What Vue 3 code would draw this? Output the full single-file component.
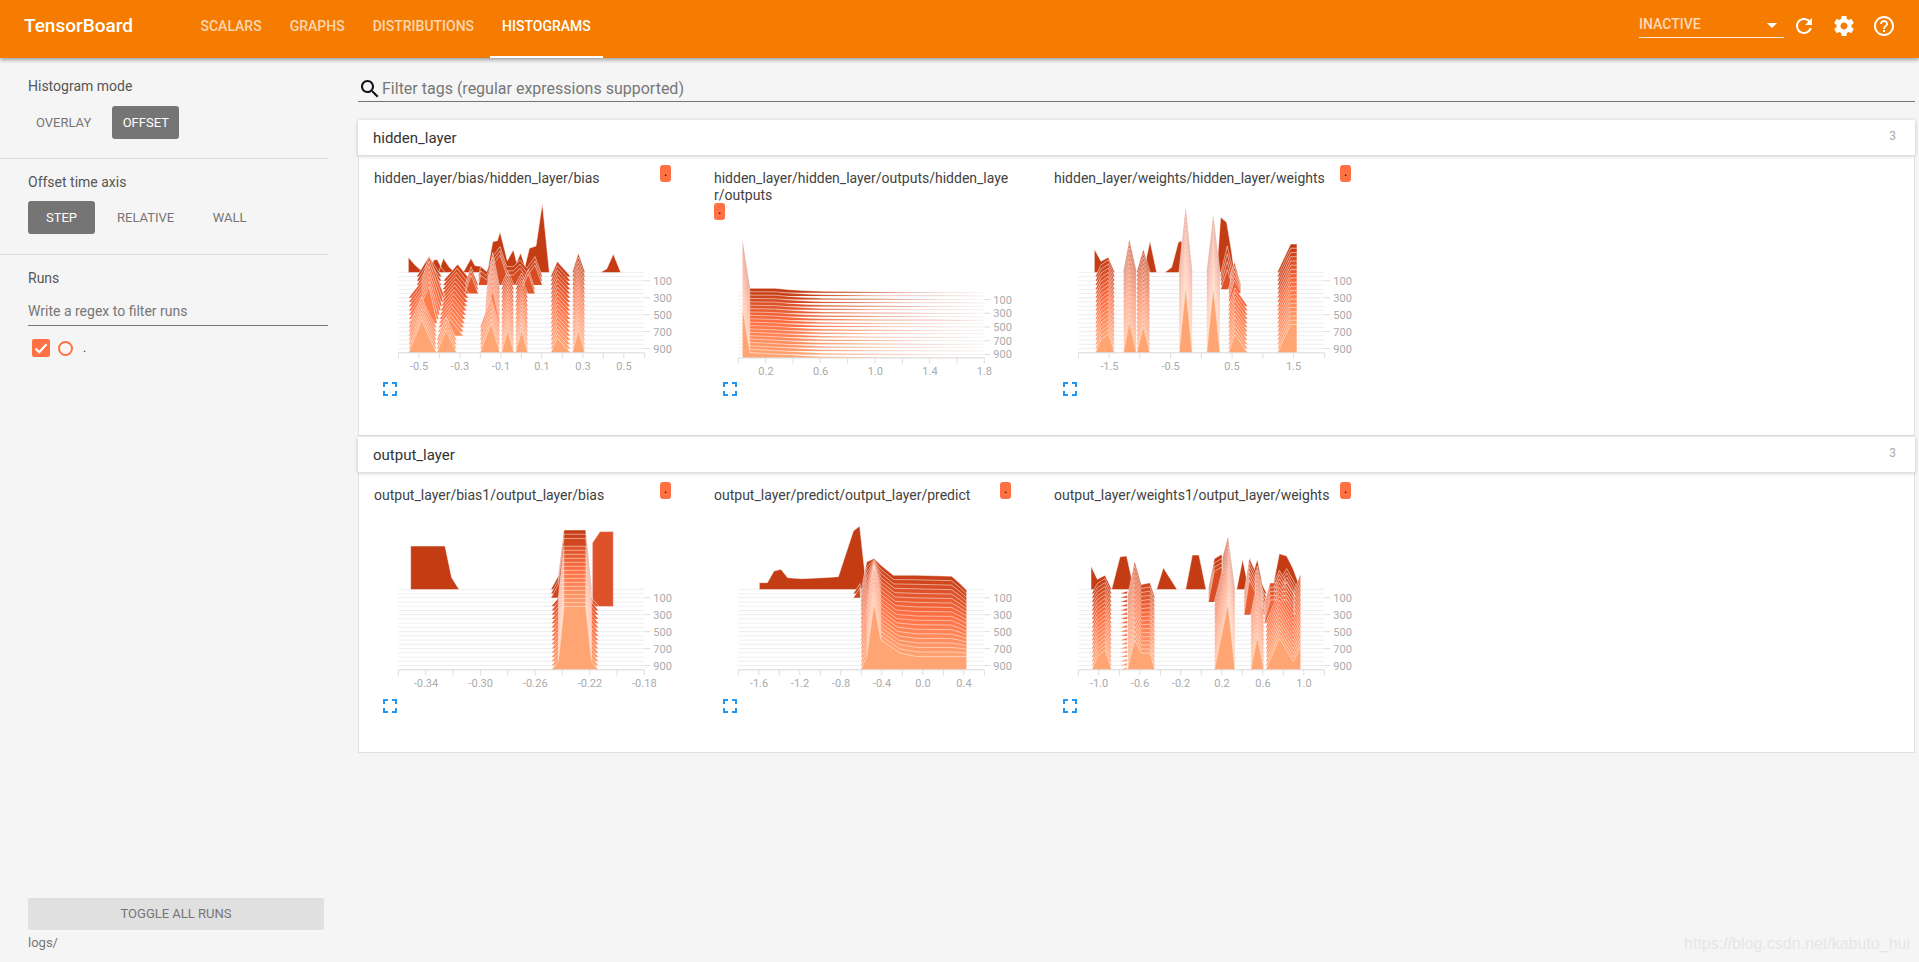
<script setup>
const tabs = ['Scalars', 'Graphs', 'Distributions', 'Histograms']

const b = (r0, r1, a, e = a) => ({ r0, r1, a, e })

const predictMid = [[482, 0], [500, 65], [522, 190], [543, 88], [590, 52], [650, 47], [755, 46], [780, 35], [800, 25], [800, 0]]

const charts1 = [
  {
    title: 'hidden_layer/bias/hidden_layer/bias', top: 78, base: 337, step: 12.7,
    ticks: 13, labels: [[177, '-0.5'], [300, '-0.3'], [423, '-0.1'], [546, '0.1'], [669, '0.3'], [792, '0.5']],
    blobs: [
      b(0, 0, [[145, 0], [145, 45], [165, 22], [190, 0]]),
      b(0, 0, [[207, 0], [222, 38], [232, 38], [245, 12], [255, 0]]),
      b(0, 0, [[236, 0], [250, 42], [268, 15], [285, 0]]),
      b(0, 0, [[310, 0], [333, 42], [345, 20], [362, 18], [382, 0], [398, 92], [412, 95], [420, 122], [442, 35], [460, 68], [470, 30], [482, 58], [495, 18], [508, 72], [528, 79], [547, 207], [568, 0]]),
      b(0, 0, [[722, 0], [740, 10], [760, 55], [782, 0]]),
      b(1, 5, [[170, 0], [207, 60], [245, 0]]),
      b(1, 3, [[355, 0], [362, 30], [380, 15], [398, 60], [420, 90], [440, 30], [460, 30], [480, 50], [500, 25], [525, 60], [547, 0]]),
      b(3, 5, [[315, 0], [333, 55], [355, 0]]),
      b(4, 5, [[480, 0], [505, 60], [525, 0]]),
      b(6, 12, [[146, 0], [185, 50], [207, 125], [255, 0]], [[146, 0], [185, 60], [207, 110], [232, 0]]),
      b(13, 19, [[146, 0], [185, 90], [207, 40], [230, 0]], [[146, 0], [185, 98], [207, 48], [230, 0]]),
      b(2, 15, [[250, 0], [293, 50], [333, 0]], [[232, 0], [270, 50], [310, 0]]),
      b(16, 19, [[230, 0], [258, 68], [290, 0]]),
      b(4, 12, [[380, 0], [398, 110], [420, 0]], [[372, 0], [398, 100], [420, 0]]),
      b(13, 19, [[360, 0], [393, 88], [420, 0]]),
      b(3, 19, [[424, 0], [443, 42], [462, 0]], [[424, 0], [443, 68], [462, 0]]),
      b(3, 19, [[466, 0], [485, 36], [504, 0]], [[466, 0], [485, 68], [504, 0]]),
      b(1, 19, [[572, 0], [592, 45], [632, 0]]),
      b(0, 19, [[637, 0], [655, 57], [675, 0]], [[637, 0], [655, 68], [675, 0]])
    ]
  },
  {
    title: 'hidden_layer/hidden_layer/outputs/hidden_layer/outputs', top: 180, base: 398, step: 10.3,
    ticks: 10, labels: [[198, '0.2'], [362, '0.6'], [526, '1.0'], [690, '1.4'], [853, '1.8']],
    blobs: [
      b(0, 19, [[127, 0], [127, 160], [150, 13], [225, 13], [270, 9], [320, 6], [370, 4], [530, 2], [700, 0.8], [850, 0]],
        [[127, 0], [127, 154], [150, 16], [220, 12], [280, 9], [330, 6], [370, 4], [530, 2], [700, 0.8], [850, 0]])
    ]
  },
  {
    title: 'hidden_layer/weights/hidden_layer/weights', top: 78, base: 337, step: 12.7,
    ticks: 9, labels: [[208, '-1.5'], [392, '-0.5'], [576, '0.5'], [761, '1.5']],
    blobs: [
      b(0, 0, [[163, 0], [163, 70], [183, 33], [205, 45], [224, 0]]),
      b(0, 0, [[310, 0], [330, 94], [350, 0]]),
      b(0, 0, [[375, 0], [395, 15], [415, 90], [425, 95], [437, 0]]),
      b(0, 0, [[530, 0], [542, 165], [560, 150], [575, 60], [583, 0]]),
      b(1, 4, [[540, 0], [562, 92], [583, 0]], [[542, 0], [562, 60], [580, 0]]),
      b(1, 19, [[166, 0], [183, 35], [205, 50], [224, 0]], [[166, 0], [183, 40], [205, 58], [224, 0]]),
      b(0, 19, [[250, 0], [268, 99], [290, 0]], [[250, 0], [268, 93], [290, 0]]),
      b(0, 19, [[290, 0], [310, 69], [330, 0]], [[290, 0], [310, 78], [330, 0]]),
      b(0, 19, [[417, 0], [437, 195], [457, 0]], [[417, 0], [437, 198], [457, 0]]),
      b(0, 19, [[500, 0], [520, 172], [540, 0]], [[500, 0], [520, 198], [540, 0]]),
      b(3, 7, [[565, 0], [583, 70], [603, 0]], [[565, 0], [583, 65], [603, 30]]),
      b(8, 19, [[565, 0], [585, 55], [623, 0]]),
      b(0, 19, [[712, 0], [752, 85], [771, 85], [771, 0]])
    ]
  }
]

const charts2 = [
  {
    title: 'output_layer/bias1/output_layer/bias', top: 99, base: 358, step: 12.7,
    ticks: 10, labels: [[198, '-0.34'], [362, '-0.30'], [526, '-0.26'], [690, '-0.22'], [853, '-0.18']],
    blobs: [
      b(0, 0, [[152, 0], [152, 130], [255, 130], [275, 35], [297, 0]]),
      b(0, 2, [[573, 0], [595, 40], [612, 178], [677, 178], [695, 0]]),
      b(4, 4, [[697, 0], [697, 190], [720, 224], [760, 224], [760, 0]]),
      b(4, 19, [[574, 0], [595, 25], [612, 180], [677, 180], [695, 25], [716, 0]], [[574, 0], [595, 25], [612, 190], [677, 190], [695, 25], [716, 0]])
    ]
  },
  {
    title: 'output_layer/predict/output_layer/predict', top: 99, base: 358, step: 12.7,
    ticks: 13, labels: [[177, '-1.6'], [300, '-1.2'], [423, '-0.8'], [546, '-0.4'], [669, '0.0'], [792, '0.4']],
    blobs: [
      b(0, 0, [[178, 0], [178, 20], [202, 20], [222, 55], [243, 60], [263, 35], [305, 32], [370, 35], [415, 38], [460, 175], [479, 190], [500, 0]]),
      b(1, 2, [[460, 0], [480, 30], [482, 0]]),
      b(1, 10, [[482, 0], [500, 95], [522, 105], [543, 85], [580, 55], [650, 55], [755, 52], [780, 30], [800, 10], [800, 0]], predictMid),
      b(11, 19, predictMid, [[482, 0], [500, 40], [522, 200], [543, 90], [600, 50], [650, 40], [755, 40], [780, 40], [800, 40], [800, 0]])
    ]
  },
  {
    title: 'output_layer/weights1/output_layer/weights', top: 99, base: 358, step: 12.7,
    ticks: 13, labels: [[177, '-1.0'], [300, '-0.6'], [423, '-0.2'], [546, '0.2'], [669, '0.6'], [792, '1.0']],
    blobs: [
      b(0, 0, [[153, 0], [153, 70], [172, 30], [195, 42], [215, 0], [240, 98], [260, 100], [282, 0]]),
      b(0, 0, [[350, 0], [370, 65], [411, 0]]),
      b(0, 0, [[437, 0], [457, 103], [477, 103], [498, 0]]),
      b(0, 0, [[590, 0], [608, 90], [620, 30], [630, 95], [640, 50], [652, 90], [670, 0]]),
      b(0, 0, [[697, 0], [718, 107], [740, 100], [760, 60], [782, 0]]),
      b(0, 3, [[505, 0], [523, 92], [545, 105], [565, 0]]),
      b(1, 6, [[612, 0], [628, 105], [650, 60], [680, 0]]),
      b(1, 4, [[697, 0], [740, 75], [782, 0]]),
      b(1, 19, [[155, 0], [172, 30], [195, 45], [215, 0]], [[155, 0], [172, 40], [195, 60], [215, 0]]),
      b(1, 19, [[240, 0], [262, 8], [262, 0]]),
      b(2, 19, [[262, 0], [284, 110], [304, 40], [330, 45], [345, 0]], [[262, 0], [284, 90], [304, 50], [330, 50], [345, 0]]),
      b(0, 19, [[523, 0], [564, 158], [585, 0]], [[523, 0], [564, 199], [585, 0]]),
      b(2, 19, [[632, 0], [652, 95], [672, 0]], [[632, 0], [652, 99], [672, 0]]),
      b(4, 8, [[672, 0], [690, 70], [740, 70], [760, 40], [775, 0]]),
      b(3, 19, [[677, 0], [718, 95], [760, 25], [782, 85], [782, 0]], [[677, 0], [718, 95], [760, 25], [782, 70], [782, 0]])
    ]
  }
]

function rowColor(r) {
  const t = r / 19
  const c0 = [196, 60, 20]
  const c1 = [255, 112, 67]
  const c2 = [255, 164, 115]
  const [a, z, k] = t < 0.5 ? [c0, c1, t * 2] : [c1, c2, (t - 0.5) * 2]
  return `rgb(${a.map((v, i) => Math.round(v + (z[i] - v) * k)).join(',')})`
}

function prepare(c) {
  const rows = []
  for (let r = 0; r < 20; r++) {
    const y = c.base + r * c.step
    const shapes = c.blobs.filter((s) => r >= s.r0 && r <= s.r1).map((s) => {
      const k = s.r1 === s.r0 ? 0 : (r - s.r0) / (s.r1 - s.r0)
      const pts = s.a.map((p, i) => {
        const x = p[0] + (s.e[i][0] - p[0]) * k
        const h = p[1] + (s.e[i][1] - p[1]) * k
        return `${x.toFixed(1)} ${(y - h).toFixed(1)}`
      })
      return 'M' + pts.join('L')
    })
    rows.push({ y, line: shapes.join(''), fill: shapes.map((d) => d + 'Z').join(''), color: rowColor(r) })
  }
  const axis = c.base + 19 * c.step
  const tickStep = (853 - 115) / (c.ticks - 1)
  return {
    ...c,
    rows,
    axis,
    viewBox: `0 ${c.top} 1020 ${c.top === 180 ? 468 : 570}`,
    tall: c.top !== 180,
    xticks: Array.from({ length: c.ticks }, (_, i) => 115 + i * tickStep),
    ylabels: [2, 6, 10, 14, 18].map((r) => ({ y: c.base + r * c.step, text: String(r * 50) }))
  }
}

const sections = [
  { name: 'hidden_layer', charts: charts1.map(prepare) },
  { name: 'output_layer', charts: charts2.map(prepare) }
]
</script>

<template>
  <div class="page">
    <header class="topbar">
      <div class="brand">TensorBoard</div>
      <nav class="tabs">
        <div v-for="t in tabs" :key="t" class="tab" :class="{ active: t === 'Histograms' }">{{ t }}</div>
      </nav>
      <div class="spacer"></div>
      <div class="runsel">
        <span>INACTIVE</span>
        <i class="caret"></i>
      </div>
      <svg class="hicon" viewBox="0 0 24 24"><path d="M17.65 6.35C16.2 4.9 14.21 4 12 4c-4.42 0-7.99 3.58-7.99 8s3.57 8 7.99 8c3.73 0 6.84-2.55 7.73-6h-2.08c-.82 2.33-3.04 4-5.65 4-3.31 0-6-2.69-6-6s2.69-6 6-6c1.66 0 3.14.69 4.22 1.78L13 11h7V4l-2.35 2.35z"/></svg>
      <svg class="hicon" viewBox="0 0 24 24"><path d="M19.43 12.98c.04-.32.07-.64.07-.98s-.03-.66-.07-.98l2.11-1.65c.19-.15.24-.42.12-.64l-2-3.46c-.12-.22-.39-.3-.61-.22l-2.49 1c-.52-.4-1.08-.73-1.69-.98l-.38-2.65C14.46 2.18 14.25 2 14 2h-4c-.25 0-.46.18-.49.42l-.38 2.65c-.61.25-1.17.59-1.69.98l-2.49-1c-.23-.09-.49 0-.61.22l-2 3.46c-.13.22-.07.49.12.64l2.11 1.65c-.04.32-.07.65-.07.98s.03.66.07.98l-2.11 1.65c-.19.15-.24.42-.12.64l2 3.46c.12.22.39.3.61.22l2.49-1c.52.4 1.08.73 1.69.98l.38 2.65c.03.24.24.42.49.42h4c.25 0 .46-.18.49-.42l.38-2.65c.61-.25 1.17-.59 1.69-.98l2.49 1c.23.09.49 0 .61-.22l2-3.46c.12-.22.07-.49-.12-.64l-2.11-1.65zM12 15.5c-1.93 0-3.5-1.57-3.5-3.5s1.57-3.5 3.5-3.5 3.5 1.57 3.5 3.5-1.57 3.5-3.5 3.5z"/></svg>
      <svg class="hicon" viewBox="0 0 24 24"><path d="M11 18h2v-2h-2v2zm1-16C6.48 2 2 6.48 2 12s4.48 10 10 10 10-4.48 10-10S17.52 2 12 2zm0 18c-4.41 0-8-3.59-8-8s3.59-8 8-8 8 3.59 8 8-3.59 8-8 8zm0-14c-2.21 0-4 1.79-4 4h2c0-1.1.9-2 2-2s2 .9 2 2c0 2-3 1.75-3 5h2c0-2.25 3-2.5 3-5 0-2.21-1.79-4-4-4z"/></svg>
    </header>

    <div class="body">
      <aside class="sidebar">
        <section class="opt opt-first">
          <div class="opt-label">Histogram mode</div>
          <div class="btns">
            <div class="btn">Overlay</div>
            <div class="btn on">Offset</div>
          </div>
        </section>
        <section class="opt opt-second">
          <div class="opt-label">Offset time axis</div>
          <div class="btns">
            <div class="btn on">Step</div>
            <div class="btn">Relative</div>
            <div class="btn">Wall</div>
          </div>
        </section>
        <section class="runs">
          <div class="opt-label">Runs</div>
          <div class="regex">Write a regex to filter runs</div>
          <div class="run-row">
            <span class="check">
              <svg viewBox="0 0 18 18"><path d="M3.5 9.5l3.7 3.7 7.3-8" fill="none" stroke="#fff" stroke-width="2.2"/></svg>
            </span>
            <span class="dot"></span>
            <span class="run-name">.</span>
          </div>
        </section>
        <div class="spacer"></div>
        <div class="toggle">Toggle all runs</div>
        <div class="logs">logs/</div>
      </aside>

      <main class="main">
        <div class="filter">
          <svg class="search" viewBox="0 0 24 24"><path d="M15.5 14h-.79l-.28-.27C15.41 12.59 16 11.11 16 9.5 16 5.91 13.09 3 9.5 3S3 5.91 3 9.5 5.91 16 9.5 16c1.61 0 3.09-.59 4.23-1.57l.27.28v.79l5 4.99L20.49 19l-4.99-5zm-6 0C7.01 14 5 11.99 5 9.5S7.01 5 9.5 5 14 7.01 14 9.5 11.99 14 9.5 14z"/></svg>
          <span>Filter tags (regular expressions supported)</span>
        </div>

        <section v-for="s in sections" :key="s.name" class="group">
          <div class="group-head">
            <span class="group-name">{{ s.name }}</span>
            <span class="group-count">3</span>
          </div>
          <div class="group-body">
            <article v-for="c in s.charts" :key="c.title" class="card">
              <div class="card-head">
                <div class="card-title">{{ c.title }}</div>
                <div class="tag">.</div>
              </div>
              <svg class="chart" :class="{ short: !c.tall }" :viewBox="c.viewBox">
                <g v-for="(row, i) in c.rows" :key="i">
                  <line class="base" x1="115" x2="853" :y1="row.y" :y2="row.y" />
                  <path v-if="row.fill" class="ridge" :d="row.fill" :fill="row.color" />
                  <path v-if="row.line" class="outline" :d="row.line" />
                </g>
                <line class="axis" x1="115" x2="853" :y1="c.axis" :y2="c.axis" />
                <line v-for="x in c.xticks" :key="x" class="axis" :x1="x" :x2="x" :y1="c.axis" :y2="c.axis + 17" />
                <text v-for="l in c.labels" :key="l[0]" class="lab" text-anchor="middle" :x="l[0]" :y="c.axis + 51">{{ l[1] }}</text>
                <g v-for="l in c.ylabels" :key="l.text">
                  <line class="axis" x1="853" x2="870" :y1="l.y" :y2="l.y" />
                  <text class="lab" x="880" :y="l.y + 12">{{ l.text }}</text>
                </g>
              </svg>
              <svg class="expand" viewBox="0 0 24 24"><path d="M7 14H5v5h5v-2H7v-3zm-2-4h2V7h3V5H5v5zm12 7h-3v2h5v-5h-2v3zM14 5v2h3v3h2V5h-5z"/></svg>
            </article>
          </div>
        </section>
      </main>
    </div>
    <div class="watermark">https://blog.csdn.net/kabuto_hui</div>
  </div>
</template>

<style>
html, body { margin: 0; background: #f5f5f5; overflow: hidden; }
</style>

<style scoped>
.page {
  position: relative;
  width: 1919px;
  height: 962px;
  display: flex;
  flex-direction: column;
  background: #f5f5f5;
  font-family: Roboto, "Liberation Sans", sans-serif;
  overflow: hidden;
}
.topbar {
  flex: none;
  height: 58px;
  background: #f57c00;
  box-shadow: 0 2px 4px rgba(0, 0, 0, 0.35);
  display: flex;
  align-items: stretch;
  color: #fff;
  position: relative;
  z-index: 3;
  padding-left: 24px;
  padding-right: 23px;
  box-sizing: border-box;
}
.brand {
  font-size: 19px;
  font-weight: 500;
  line-height: 52px;
  width: 164.5px;
}
.tabs { display: flex; gap: 4px; }
.tab {
  padding: 0 12px;
  font-size: 14px;
  font-weight: 500;
  text-transform: uppercase;
  line-height: 52px;
  color: rgba(255, 255, 255, 0.7);
  box-sizing: border-box;
  height: 58px;
}
.tab.active { color: #fff; border-bottom: 2px solid #fff; }
.spacer { flex: 1; }
.runsel {
  width: 145px;
  height: 38px;
  box-sizing: border-box;
  border-bottom: 1px solid rgba(255, 255, 255, 0.85);
  display: flex;
  align-items: center;
  justify-content: space-between;
  padding: 11px 7px 0 0;
  font-size: 14px;
  font-weight: 500;
  color: rgba(255, 255, 255, 0.72);
  margin-right: 8px;
}
.caret {
  width: 0;
  height: 0;
  border: 5px solid transparent;
  border-top-color: #fff;
  border-bottom: 0;
  margin-top: 3px;
}
.hicon {
  width: 24px;
  height: 24px;
  fill: #fff;
  margin: 14px 0 0 16px;
}
.hicon:first-of-type { margin-left: 0; }
.body { flex: 1; display: flex; min-height: 0; }
.sidebar {
  width: 328px;
  flex: none;
  display: flex;
  flex-direction: column;
  box-sizing: border-box;
}
.opt {
  box-sizing: border-box;
  border-bottom: 1px solid #ddd;
  padding-left: 28px;
}
.opt-first { height: 101px; padding-top: 20px; }
.opt-second { height: 96px; padding-top: 15px; }
.opt-label {
  font-size: 14px;
  line-height: 17px;
  color: #555;
}
.btns { display: flex; margin-top: 10px; }
.opt-first .btns { margin-top: 11px; gap: 13px; }
.opt-second .btns { gap: 14px; }
.btn {
  height: 33px;
  min-width: 67px;
  padding: 0 8px;
  box-sizing: border-box;
  border-radius: 3px;
  font-size: 13px;
  line-height: 33px;
  text-align: center;
  text-transform: uppercase;
  color: #757575;
}
.btn.on { background: #757575; color: #fff; }
.runs { padding: 15px 0 0 28px; }
.regex {
  margin-top: 16px;
  height: 23px;
  box-sizing: border-box;
  border-bottom: 1px solid #777;
  font-size: 14px;
  line-height: 17px;
  color: #777;
}
.run-row { display: flex; align-items: center; margin-top: 13px; padding-left: 4px; }
.check {
  width: 18px;
  height: 18px;
  border-radius: 2px;
  background: #ff7043;
  display: block;
}
.check svg { display: block; width: 18px; height: 18px; }
.dot {
  width: 15px;
  height: 15px;
  box-sizing: border-box;
  border: 2px solid #ff7043;
  border-radius: 50%;
  margin-left: 8px;
}
.run-name { font-size: 12px; color: #333; margin-left: 10px; }
.toggle {
  margin-left: 28px;
  width: 296px;
  height: 32px;
  flex: none;
  background: #e0e0e0;
  border-radius: 2px;
  font-size: 13px;
  line-height: 32px;
  text-align: center;
  text-transform: uppercase;
  color: #757575;
}
.logs {
  margin: 5px 0 11px 28px;
  font-size: 13px;
  line-height: 16px;
  color: #777;
}
.main {
  flex: 1;
  min-width: 0;
  padding: 0 4px 0 30px;
}
.filter {
  display: flex;
  align-items: center;
  height: 25px;
  padding-top: 18px;
  margin-bottom: 18px;
  border-bottom: 1px solid #757575;
  font-size: 16px;
  color: #777;
}
.search { width: 24px; height: 24px; fill: #111; flex: none; }
.group + .group { margin-top: 1px; }
.group-head {
  position: relative;
  z-index: 1;
  height: 35px;
  background: #fff;
  box-shadow: 0 1px 4px rgba(0, 0, 0, 0.22);
  display: flex;
  align-items: center;
  justify-content: space-between;
  padding: 0 19px 0 15px;
}
.group-name { font-size: 15px; color: #333; padding-top: 1px; }
.group-count { font-size: 12px; color: #aaa; margin-top: -4px; }
.group-body {
  height: 281px;
  box-sizing: border-box;
  background: #fff;
  border: 1px solid #e0e0e0;
  border-top: 0;
  display: flex;
  padding-left: 1px;
}
.card {
  width: 340px;
  flex: none;
  box-sizing: border-box;
  padding-top: 10px;
}
.card-head {
  display: flex;
  flex-wrap: wrap;
  justify-content: space-between;
  align-items: flex-start;
  margin-left: 14px;
  width: 297px;
}
.card-title {
  padding-top: 5px;
  margin-bottom: -1px;
  font-size: 14px;
  line-height: 17px;
  color: #424242;
  word-break: break-all;
}
.tag {
  width: 11px;
  height: 17px;
  border-radius: 3px;
  background: #ff7043;
  color: #000;
  font-size: 12px;
  line-height: 15px;
  text-align: center;
}
.chart {
  display: block;
  width: 340px;
  height: 190px;
  overflow: visible;
}
.chart.short { height: 156px; }
.base { stroke: #eee; stroke-width: 3; }
.outline { fill: none; stroke: #fff; stroke-opacity: 0.5; stroke-width: 3; stroke-linejoin: round; }
.axis { stroke: #ddd; stroke-width: 3; }
.lab {
  font-size: 33px;
  fill: #aaa;
  font-family: Roboto, "Liberation Sans", sans-serif;
}
.expand {
  display: block;
  width: 24px;
  height: 24px;
  margin: 1px 0 0 18px;
  fill: #2196f3;
}
.watermark {
  position: absolute;
  right: 9px;
  bottom: 9px;
  font-family: "Liberation Sans", sans-serif;
  font-size: 16px;
  color: #e6e6e6;
}
</style>
